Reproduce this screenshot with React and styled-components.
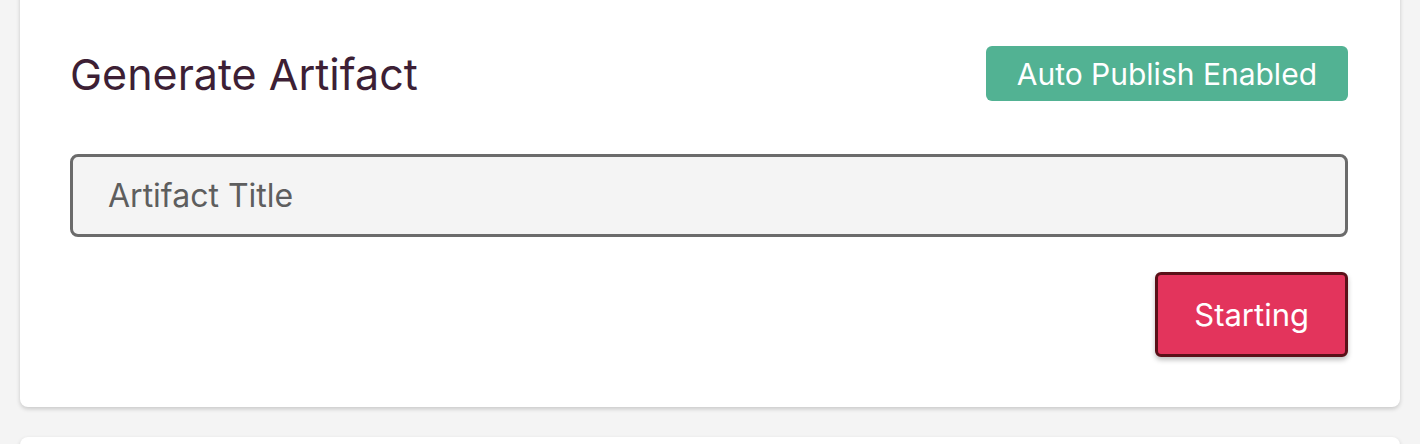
import React from "react";
import styled, { createGlobalStyle } from "styled-components";

const GlobalStyle = createGlobalStyle`
  html, body {
    margin: 0;
    padding: 0;
    background: #f4f4f4;
    font-family: Inter, "Noto Sans", sans-serif;
  }
`;

const Page = styled.div`
  display: flex;
  flex-direction: column;
  gap: 30px;
  padding: 0 20px;
  margin-top: -18px;
`;

const Card = styled.section`
  background: #ffffff;
  border-radius: 8px;
  box-shadow: 0 2px 4px rgba(0, 0, 0, 0.18);
  padding: ${(p) => p.$pad || "64px 52px 50px 50px"};
  min-height: ${(p) => p.$minHeight || "auto"};
`;

const Header = styled.div`
  display: flex;
  align-items: center;
  justify-content: space-between;
`;

const Title = styled.h2`
  margin: 0;
  font-size: 43px;
  font-weight: 400;
  color: #3d1f35;
`;

const Badge = styled.span`
  background: #52b293;
  color: #ffffff;
  border-radius: 6px;
  padding: 0 31px;
  height: 55px;
  display: inline-flex;
  align-items: center;
  font-size: 30px;
`;

const Input = styled.input`
  display: block;
  box-sizing: border-box;
  width: 100%;
  height: 83px;
  margin-top: 53px;
  padding: 0 35px;
  border: 3px solid #6b6b6b;
  border-radius: 8px;
  background: #f4f4f4;
  font-family: inherit;
  font-size: 32px;
  color: #333;
  &::placeholder {
    color: #5e5e5e;
  }
`;

const Actions = styled.div`
  display: flex;
  justify-content: flex-end;
  margin-top: 35px;
`;

const Button = styled.button`
  box-sizing: border-box;
  height: 85px;
  padding: 0 36px;
  background: #e3345c;
  color: #ffffff;
  border: 3px solid #5a1018;
  border-radius: 6px;
  box-shadow: 0 3px 5px rgba(0, 0, 0, 0.25);
  font-family: inherit;
  font-size: 31px;
`;

export default function App() {
  return (
    <>
      <GlobalStyle />
      <Page>
        <Card>
          <Header>
            <Title>Generate Artifact</Title>
            <Badge>Auto Publish Enabled</Badge>
          </Header>
          <Input placeholder="Artifact Title" />
          <Actions>
            <Button>Starting</Button>
          </Actions>
        </Card>
        <Card $minHeight="200px" />
      </Page>
    </>
  );
}
